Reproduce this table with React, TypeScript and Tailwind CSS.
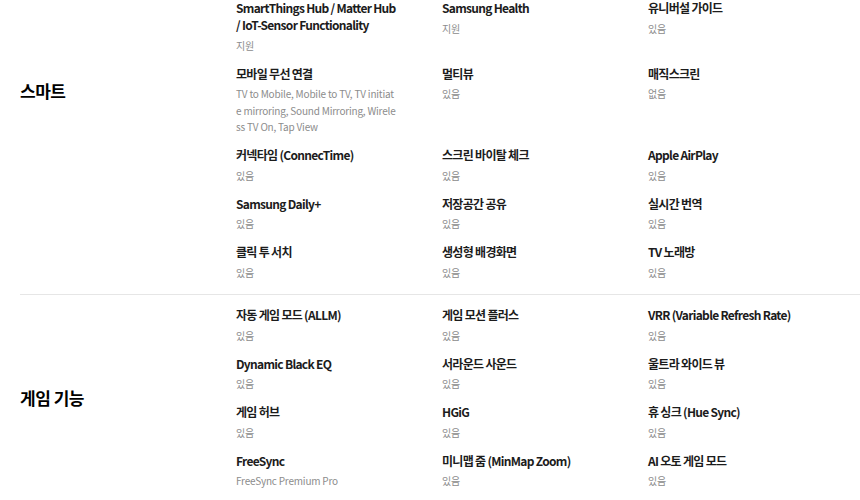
import React from "react";

type Spec = { title: string; value: string };

const smart: Spec[] = [
  { title: "SmartThings Hub / Matter Hub / IoT-Sensor Functionality", value: "지원" },
  { title: "Samsung Health", value: "지원" },
  { title: "유니버설 가이드", value: "있음" },
  { title: "모바일 무선 연결", value: "TV to Mobile, Mobile to TV, TV initiate mirroring, Sound Mirroring, Wireless TV On, Tap View" },
  { title: "멀티뷰", value: "있음" },
  { title: "매직스크린", value: "없음" },
  { title: "커넥타임 (ConnecTime)", value: "있음" },
  { title: "스크린 바이탈 체크", value: "있음" },
  { title: "Apple AirPlay", value: "있음" },
  { title: "Samsung Daily+", value: "있음" },
  { title: "저장공간 공유", value: "있음" },
  { title: "실시간 번역", value: "있음" },
  { title: "클릭 투 서치", value: "있음" },
  { title: "생성형 배경화면", value: "있음" },
  { title: "TV 노래방", value: "있음" },
];

const game: Spec[] = [
  { title: "자동 게임 모드 (ALLM)", value: "있음" },
  { title: "게임 모션 플러스", value: "있음" },
  { title: "VRR (Variable Refresh Rate)", value: "있음" },
  { title: "Dynamic Black EQ", value: "있음" },
  { title: "서라운드 사운드", value: "있음" },
  { title: "울트라 와이드 뷰", value: "있음" },
  { title: "게임 허브", value: "있음" },
  { title: "HGiG", value: "있음" },
  { title: "휴 싱크 (Hue Sync)", value: "있음" },
  { title: "FreeSync", value: "FreeSync Premium Pro" },
  { title: "미니맵 줌 (MinMap Zoom)", value: "있음" },
  { title: "AI 오토 게임 모드", value: "있음" },
];

function SpecItem({ item }: { item: Spec }) {
  return (
    <div className="pr-[45px]">
      <p className="text-[12px] leading-[17px] font-bold text-[#1c1c1c] tracking-[-0.7px]">{item.title}</p>
      <p className="mt-[4.5px] text-[10px] leading-[16.5px] text-[#8c8c8c] tracking-[-0.2px] break-all">{item.value}</p>
    </div>
  );
}

export default function App() {
  return (
    <div className="w-[860px] h-[500px] overflow-hidden bg-white pl-5 font-['Noto_Sans_CJK_KR',sans-serif]">
      <section className="flex -mt-px pb-[13px] border-b border-[#e6e6e6]">
        <h3 className="w-[216px] shrink-0 self-start mt-[80px] text-[17px] leading-6 font-bold text-black tracking-[-0.5px]">스마트</h3>
        <div className="grid grid-cols-[206px_206px_206px] gap-y-[10.5px]">
          {smart.map((s) => (
            <SpecItem key={s.title} item={s} />
          ))}
        </div>
      </section>
      <section className="flex items-center pt-[11px] pb-3">
        <h3 className="w-[216px] shrink-0 text-[17px] leading-6 font-bold text-black tracking-[-0.5px]">게임 기능</h3>
        <div className="grid grid-cols-[206px_206px_206px] gap-y-[10.5px]">
          {game.map((s) => (
            <SpecItem key={s.title} item={s} />
          ))}
        </div>
      </section>
    </div>
  );
}
